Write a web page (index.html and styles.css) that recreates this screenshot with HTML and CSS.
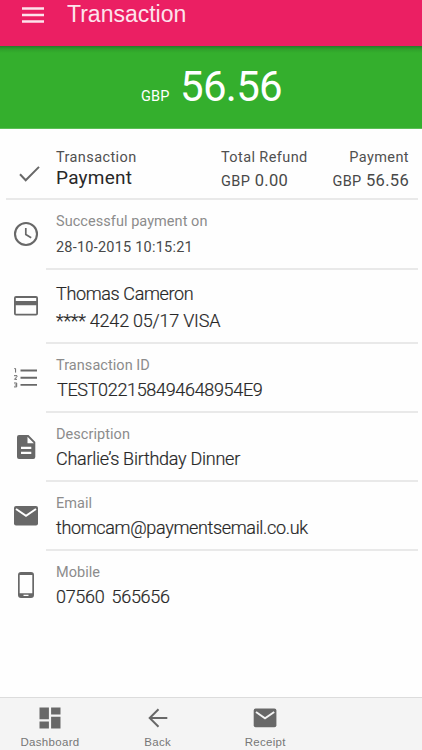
FILE: index.html
```html
<!DOCTYPE html>
<html lang="en">
<head>
<meta charset="utf-8">
<title>Transaction</title>
<link rel="stylesheet" href="styles.css">
</head>
<body>
<div class="app">
  <header class="topbar">
    <svg class="menu" width="22" height="16" viewBox="0 0 22 16"><path d="M0 1.500h22M0 8h22M0 14.500h22" stroke="#fde3ec" stroke-width="2.600"/></svg>
    <h1 class="title">Transaction</h1>
  </header>
  <section class="amount"><span class="currency">GBP</span><span class="total">56.56</span></section>
  <main class="details">
    <section class="summary">
      <svg class="check" width="21" height="16" viewBox="0 0 21 16"><path d="M1 8.300l5.700 6L20 .9" fill="none" stroke="#686868" stroke-width="2"/></svg>
      <div class="kind"><span class="head">Transaction</span><span class="state">Payment</span></div>
      <div class="refund"><span class="head">Total Refund</span><span class="money"><small>GBP</small> 0.00</span></div>
      <div class="paid"><span class="head">Payment</span><span class="money"><small>GBP</small> 56.56</span></div>
    </section>
    <section class="row date">
      <div class="icon"><svg width="26" height="26" viewBox="0 0 26 26" fill="none" stroke="#686868"><circle cx="13" cy="13" r="11" stroke-width="2.100"/><path d="M12.800 7v6.500l5.400 3.300" stroke-width="1.700"/></svg></div>
      <div class="body"><span class="label">Successful payment on</span><span class="value small">28-10-2015 10:15:21</span></div>
    </section>
    <section class="row card">
      <div class="icon"><svg width="26" height="22" viewBox="0 0 26 22"><path fill="#686868" fill-rule="evenodd" d="M3 1h20a2 2 0 0 1 2 2v15.500a2 2 0 0 1-2 2H3a2 2 0 0 1-2-2V3a2 2 0 0 1 2-2zm-.2 2v3h20.400V3zm0 7.300v8.400h20.400v-8.400z"/></svg></div>
      <div class="body"><span class="value t-name">Thomas Cameron</span><span class="value t-card">**** 4242 05/17 VISA</span></div>
    </section>
    <section class="row">
      <div class="icon"><svg width="26" height="22" viewBox="0 0 26 22"><path d="M7.500 3.500H24M7.500 10.700H24M7.500 17.900H24" stroke="#686868" stroke-width="1.900"/><path d="M1.300 1.600h1.300v4M1 8.700h3v.8L1.500 12.300H4M1 16h2.700v3.900H1M1.800 18h1.900" fill="none" stroke="#686868"/></svg></div>
      <div class="body"><span class="label">Transaction ID</span><span class="value t-test">TEST022158494648954E9</span></div>
    </section>
    <section class="row">
      <div class="icon"><svg width="20" height="26" viewBox="0 0 20 26"><path fill="#686868" fill-rule="evenodd" d="M3 1h9.500L19.300 8v15a2 2 0 0 1-2 2H3a2 2 0 0 1-2-2V3a2 2 0 0 1 2-2zm8.500 1.800v6.400h6.400zM5 12.800V15h10.300v-2.200zm0 5V20h10.300v-2.200z"/></svg></div>
      <div class="body"><span class="label">Description</span><span class="value t-dinner">Charlie’s Birthday Dinner</span></div>
    </section>
    <section class="row">
      <div class="icon"><svg width="26" height="22" viewBox="0 0 26 22"><rect x="1" y="1" width="24" height="19.500" rx="2" fill="#686868"/><path d="M3 4l10 6.800L23 4" fill="none" stroke="#fff" stroke-width="2"/></svg></div>
      <div class="body"><span class="label">Email</span><span class="value t-mail">thomcam@paymentsemail.co.uk</span></div>
    </section>
    <section class="row mobile">
      <div class="icon"><svg width="18" height="28" viewBox="0 0 18 28"><path fill="#686868" fill-rule="evenodd" d="M4 1h10a3 3 0 0 1 3 3v20a3 3 0 0 1-3 3H4a3 3 0 0 1-3-3V4a3 3 0 0 1 3-3zM2.700 4v18.200h12.600V4zM6.500 23.800v1.300h5v-1.300z"/></svg></div>
      <div class="body"><span class="label">Mobile</span><span class="value t-phone">07560 565656</span></div>
    </section>
  </main>
  <nav class="tabs">
    <a class="tab"><svg width="22" height="22" viewBox="0 0 22 22"><path fill="#686868" d="M.5.500h9.400v11.700H.5zM12.100.5h9.400v7h-9.400zM.5 14.500h9.400v7H.5zM12.100 9.800h9.400v11.700h-9.400z"/></svg><span>Dashboard</span></a>
    <a class="tab"><svg width="20" height="22" viewBox="0 0 20 22"><path d="M19.300 11H2M10.500 2.200L1.700 11l8.800 8.800" fill="none" stroke="#686868" stroke-width="2"/></svg><span>Back</span></a>
    <a class="tab"><svg width="24" height="22" viewBox="0 0 24 22"><rect x=".7" y="1.500" width="22.700" height="18.700" rx="2" fill="#686868"/><path d="M3 5l9 6.300L21.200 5" fill="none" stroke="#f4f4f4" stroke-width="2"/></svg><span>Receipt</span></a>
  </nav>
</div>
</body>
</html>
```
FILE: styles.css
```css
* { box-sizing: border-box; }
body { margin: 0; background: #fefefe; font-family: Roboto, sans-serif; color: #282828; }
svg { display: block; flex: none; }
.app { width: 422px; height: 750px; display: flex; flex-direction: column; overflow: hidden; }
.topbar { height: 46px; flex: none; display: flex; align-items: flex-start; padding: 7px 0 0 22px; background: #eb1f63; }
.title { margin: -6px 0 0 23px; font: 400 23px/26px "Liberation Sans", sans-serif; color: #fde3ec; }
.amount { height: 83px; flex: none; display: flex; align-items: baseline; padding: 16px 0 0 141px; color: #fff; background: linear-gradient(#2a7a29, #2f9f2b 3px, #34af2d 7px); border-bottom: 1px solid #5abf55; }
.currency { width: 39px; font-size: 14.5px; letter-spacing: .2px; }
.total { font-size: 42px; line-height: 50px; letter-spacing: -.7px; }
.details { flex: 1; display: flex; flex-direction: column; padding: 0 4px 0 6px; }
.summary { height: 71px; display: flex; border-bottom: 2px solid #e9e9e9; padding-top: 19px; white-space: nowrap; }
.check { margin: 18px 17px 0 13px; width: 21px; }
.kind, .refund, .paid, .body { display: flex; flex-direction: column; }
.kind { width: 165px; margin-left: -1px; }
.refund { width: 100px; }
.paid { flex: 1; align-items: flex-end; padding-right: 9px; }
.head { font-size: 14.5px; line-height: 20px; color: #505050; letter-spacing: .4px; }
.state { font-size: 19px; line-height: 20px; letter-spacing: .25px; }
.money { font-size: 16.5px; line-height: 26px; color: #484848; letter-spacing: .3px; }
.money small { font-size: 14.5px; letter-spacing: .4px; }
.row { height: 69px; display: flex; white-space: nowrap; }
.icon { width: 40px; display: flex; align-items: center; justify-content: center; padding-bottom: 2px; }
.body { flex: 1; border-bottom: 2px solid #e9e9e9; padding: 12px 0 0 10px; }
.label { font-size: 14.5px; line-height: 20px; color: #8c8c8c; letter-spacing: .05px; }
.value { font-size: 18px; line-height: 24px; margin-top: 2px; font-weight: 300; -webkit-text-stroke: .2px #282828; }
.small { font-size: 14.5px; line-height: 20px; margin-top: 6px; font-weight: 400; letter-spacing: .22px; color: #484848; -webkit-text-stroke: 0; }
.date { height: 70px; }
.card { height: 74px; }
.card .body { padding-top: 12px; }
.card .value { margin-top: 0; }
.card .value + .value { margin-top: 3px; }
.t-name { letter-spacing: -.36px; }
.t-card { letter-spacing: -.22px; }
.t-test { letter-spacing: -.33px; padding-left: 1px; }
.t-dinner { letter-spacing: -.26px; }
.t-mail { letter-spacing: -.34px; }
.t-phone { letter-spacing: -.3px; word-spacing: 3px; }
.mobile .body { border: 0; }
.tabs { height: 53px; flex: none; display: flex; border-top: 1px solid #dcdcdc; background: #f4f4f4; color: #777; font: 11.5px/14px "Liberation Sans", sans-serif; letter-spacing: .3px; }
.tab { width: 107.500px; display: flex; flex-direction: column; align-items: center; padding-top: 9px; gap: 6px; }
.tab:first-child { width: 100px; margin-right: 4px; }
```
